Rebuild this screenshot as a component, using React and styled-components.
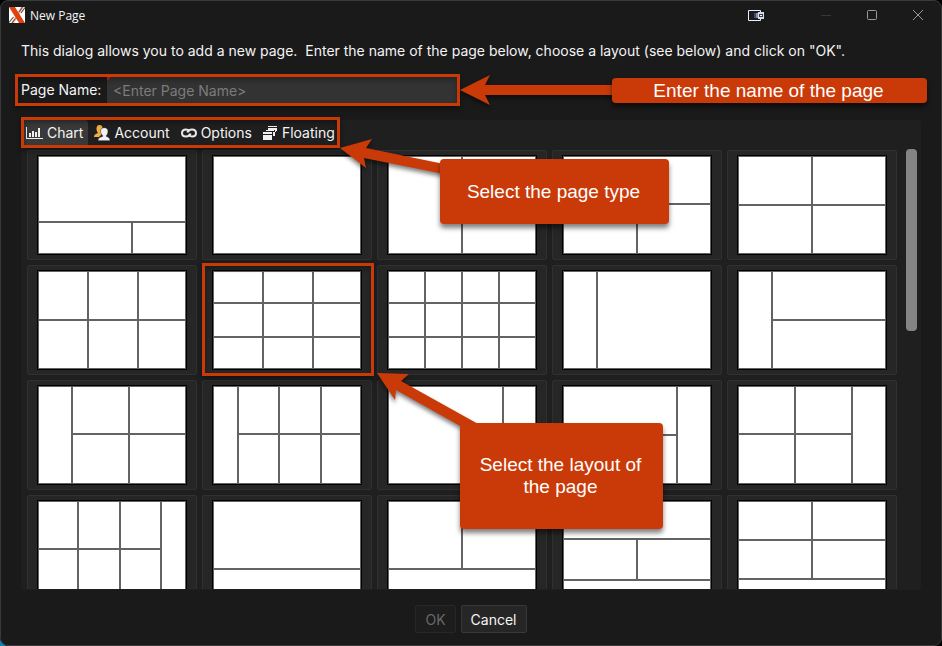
import React, { useState } from "react";
import styled, { createGlobalStyle, css } from "styled-components";

const accent = "#ca3a08";

const GlobalStyle = createGlobalStyle`
  * {
    box-sizing: border-box;
  }

  body {
    margin: 0;
    background: #000;
    color: #f4f4f4;
    font-family: Inter, "Liberation Sans", sans-serif;
    font-size: 14px;
  }

  button, input {
    font: inherit;
    color: inherit;
  }
`;

const Desktop = styled.div`
  position: relative;
  height: 100vh;
  background: linear-gradient(45deg, #0a84b8 4px, #000 5px);
`;

const Dialog = styled.main`
  display: flex;
  flex-direction: column;
  height: 100%;
  background: #1a1a1a;
  border: 1px solid #3a3a3a;
  border-radius: 8px;
`;

const TitleBar = styled.header`
  display: flex;
  align-items: center;
  height: 28px;
  padding-left: 8px;
`;

const Title = styled.h1`
  flex: 1;
  margin: 0 0 0 5px;
  font: 400 12px "Open Sans", "Noto Sans", sans-serif;
`;

const WindowButton = styled.button`
  display: flex;
  align-items: center;
  justify-content: center;
  width: 46px;
  height: 28px;
  padding: 0;
  border: 0;
  background: none;
`;

const DockButton = styled(WindowButton)`
  margin-right: 24px;
`;

const Body = styled.div`
  display: flex;
  flex: 1;
  flex-direction: column;
  min-height: 0;
  padding: 12px 20px;
`;

const Intro = styled.p`
  margin: 0 0 16px;
  line-height: 20px;
  white-space: pre-wrap;
`;

// orange frame drawn around the part that a callout points at
const framed = css`
  position: relative;

  &::after {
    content: "";
    position: absolute;
    border: 3px solid ${accent};
    box-shadow: 0 3px 5px rgba(0, 0, 0, 0.4), inset 0 3px 5px rgba(0, 0, 0, 0.3);
    pointer-events: none;
    inset: ${(props) => props.$frame || "-3px"};
  }
`;

const NameRow = styled.div`
  ${framed}
  display: flex;
  width: 436px;
  height: 26px;
  margin-bottom: 17px;
`;

const NameLabel = styled.label`
  width: 86px;
  line-height: 26px;
  white-space: nowrap;
`;

const NameField = styled.div`
  position: relative;
  display: flex;
  flex: 1;

  &::before {
    content: "";
    position: absolute;
    border: 2px solid;
    border-color: #c8202c transparent transparent #c8202c;
  }
`;

const NameInput = styled.input`
  flex: 1;
  min-width: 0;
  padding: 0 6px;
  border: 0;
  background: #333;
  outline: none;

  &::placeholder {
    color: #7b7b7b;
    opacity: 1;
  }
`;

const Panel = styled.section`
  display: flex;
  flex: 1;
  flex-direction: column;
  min-height: 0;
  padding-bottom: 1px;
  background: #1f1f1f;
  border-radius: 3px;
`;

const Tabs = styled.div`
  ${framed}
  display: flex;
  align-self: flex-start;
  gap: 1px;
  height: 25px;
  margin-bottom: 4px;
`;

const Tab = styled.button`
  display: flex;
  align-items: center;
  gap: 4px;
  height: 25px;
  padding: 0 5px;
  border: 0;
  border-radius: 0 3px 0 0;
  background: ${(props) => (props.$active ? "#393939" : "none")};
`;

const ScrollArea = styled.div`
  display: flex;
  justify-content: space-between;
  flex: 1;
  min-height: 0;
  padding: 0 4px 0 6px;
  overflow: hidden;
`;

const LayoutGrid = styled.div`
  display: grid;
  flex: 1;
  grid-template-columns: repeat(auto-fill, 170px);
  align-content: start;
  gap: 5px;
  padding-top: 1px;
`;

const ScrollThumb = styled.div`
  width: 11px;
  height: 182px;
  border-radius: 4px;
  background: #848484;
`;

const LayoutCard = styled.button`
  height: 110px;
  padding: 4px 9px;
  border: 1px solid #303030;
  border-radius: 2px;
  background: #262626;
  ${(props) => props.$frame && framed}
`;

const Thumb = styled.span`
  display: flex;
  height: 100px;
  padding: 1px;
  border: 1px solid #000;
  background: #636363;
`;

const Split = styled.span`
  display: flex;
  flex: ${(props) => props.$size} 1 0;
  flex-direction: ${(props) => (props.$down ? "column" : "row")};
  gap: 2px;
`;

const Pane = styled.span`
  flex: ${(props) => props.$size} 1 0;
  background: #fff;
`;

const Footer = styled.footer`
  display: flex;
  justify-content: center;
  gap: 5px;
  margin-top: 15px;
`;

const FooterButton = styled.button`
  height: 28px;
  padding: 0 9px;
  border: 1px solid #383838;
  border-radius: 2px;
  background: #262626;

  &:disabled {
    color: #696969;
    border-color: #272727;
    background: #1d1d1d;
  }
`;

const Arrows = styled.svg`
  position: absolute;
  top: 0;
  left: 0;
  overflow: visible;
  pointer-events: none;
  fill: ${accent};
  filter: drop-shadow(0 3px 2px rgba(0, 0, 0, 0.5));
`;

const Callout = styled.div`
  position: absolute;
  display: flex;
  align-items: center;
  justify-content: center;
  left: ${(props) => props.$x}px;
  top: ${(props) => props.$y}px;
  width: ${(props) => props.$w}px;
  height: ${(props) => props.$h}px;
  padding: 0 18px 0 16px;
  border-radius: 4px;
  background: ${accent};
  box-shadow: 0 4px 5px rgba(0, 0, 0, 0.5);
  color: #fff;
  font: 19px/22px "Liberation Sans", Arial, sans-serif;
  text-align: center;
`;

// A layout is a tree: a number is a pane, an object splits its space.
const row = (size, ...items) => ({ size, items });
const col = (size, ...items) => ({ size, items, down: true });

const twoRows = (size, widths, top = 46, bottom = 48) =>
  col(size, row(top, ...widths), row(bottom, ...widths));

const layouts = [
  col(1, 64, row(30, 92, 52)),
  row(1, 1),
  row(1, 72, 72),
  col(1, 46, row(48, 72, 72)),
  twoRows(1, [72, 72], 47, 47),
  twoRows(1, [48, 48, 46], 47, 47),
  col(1, row(30, 48, 48, 46), row(32, 48, 48, 46), row(30, 48, 48, 46)),
  col(1, row(30, 35, 35, 35, 35), row(32, 35, 35, 35, 35), row(30, 35, 35, 35, 35)),
  row(1, 32, 112),
  row(1, 32, col(112, 47, 47)),
  row(1, 32, twoRows(112, [55, 55])),
  row(1, 23, twoRows(121, [39, 40, 38])),
  row(1, 113, 31),
  row(1, col(112, 47, 47), 32),
  row(1, twoRows(112, [55, 55]), 32),
  row(1, twoRows(121, [38, 40, 39]), 23),
  col(1, 66, 28),
  col(1, row(66, 72, 72), 28),
  col(1, 36, row(39, 72, 72), 17),
  col(1, row(37, 72, 72), row(37, 72, 72), 18),
];

function LayoutNode({ node }) {
  if (typeof node === "number") {
    return <Pane $size={node} />;
  }
  return (
    <Split $size={node.size} $down={node.down}>
      {node.items.map((item, i) => (
        <LayoutNode key={i} node={item} />
      ))}
    </Split>
  );
}

const LogoIcon = () => (
  <svg width="16" height="16" viewBox="0 0 16 16">
    <path fill="#fff" d="M0 0h16v16H0z" />
    <path stroke="#4c4c4c" strokeWidth="1.1" d="M10 5 13.500 0M12 6 16 .5M0 15.500 4.500 10M3 16 6.500 11.500" />
    <path fill="#dd4310" d="M0 0h6L16 16h-6z" />
    <path fill="#dd4310" d="M12 0h3L5 16H2z" opacity=".35" />
  </svg>
);

const DockIcon = () => (
  <svg width="16" height="11" viewBox="0 0 16 11">
    <path fill="#171a22" stroke="#eceef5" d="M.5.5h12v10H.5z" />
    <path fill="#4a4c54" d="M6 3h2v5H6z" />
    <path fill="#8b8ea0" d="M8 3h2v5H8z" />
    <path fill="#d9dbe8" d="M10 2h6v7h-6z" />
    <path fill="#3a3d4c" d="M11 4h4v3h-4z" />
    <path fill="#fff" d="M12 5h2v1h-2z" />
  </svg>
);

const ChartIcon = () => (
  <svg width="17" height="14" viewBox="0 0 17 14" fill="#eee">
    <path d="M0 1h1v11h16v1H0zM3 7h2v4H3zM6 5h2v6H6zM9 6h2v5H9zM12 2h2v9h-2z" />
  </svg>
);

const AccountIcon = () => (
  <svg width="16" height="16" viewBox="0 0 16 16">
    <path fill="#f0ad42" d="M3 1.500C4-.5 8-.5 8.500 2.500L7 5v5l-2 2H0c0-2.500 1.500-3 4-4C2.500 6 2 3.500 3 1.500z" />
    <path fill="#f0f0f0" stroke="#222" strokeWidth=".5" d="M6.500 6C6.500 1.500 14 1.500 14 6c0 2-.7 3.500-1.600 4.500v.9c2 .8 3.600 1.200 3.600 4.300H4c0-3 2-3.500 4.600-4.300v-.9C7.500 9.500 6.500 8 6.500 6z" />
  </svg>
);

const LinkIcon = () => (
  <svg width="16" height="10" viewBox="0 0 16 10" fill="none" stroke="#e8e8e8" strokeWidth="2">
    <path d="M9.500 5.500C9 7.500 7.300 8.500 5 8.500 2.500 8.500 1 7 1 5s1.500-3.500 4-3.500c1.500 0 2.500.5 3.500 2" />
    <path d="M6.500 4.500C7 2.500 8.700 1.500 11 1.500c2.500 0 4 1.500 4 3.500s-1.500 3.500-4 3.500c-1.500 0-2.500-.5-3.500-2" />
  </svg>
);

const FloatIcon = () => (
  <svg width="15" height="14" viewBox="0 0 15 14" fill="#f0f0f0">
    <path d="M5 0h9v1H5zM5 2h9v3h-1v1h-1V4H5z" />
    <path d="M3 4h8v1H3zM10 6h2v4h-2zM0 6h9v2H0zM0 9h9v5H0z" />
  </svg>
);

const tabs = [
  { name: "Chart", Icon: ChartIcon },
  { name: "Account", Icon: AccountIcon },
  { name: "Options", Icon: LinkIcon },
  { name: "Floating", Icon: FloatIcon },
];

function App() {
  const [name, setName] = useState("");
  const [tab, setTab] = useState("Chart");

  return (
    <Desktop>
      <GlobalStyle />
      <Dialog>
        <TitleBar>
          <LogoIcon />
          <Title>New Page</Title>
          <DockButton aria-label="Dock">
            <DockIcon />
          </DockButton>
          <WindowButton aria-label="Minimize">
            <svg width="10" height="10" stroke="#383838">
              <path d="M0 5.500h10" />
            </svg>
          </WindowButton>
          <WindowButton aria-label="Maximize">
            <svg width="10" height="10" fill="none" stroke="#999">
              <rect x=".5" y=".5" width="9" height="9" rx="1" />
            </svg>
          </WindowButton>
          <WindowButton aria-label="Close">
            <svg width="10" height="10" stroke="#999">
              <path d="M0 0l10 10M10 0L0 10" />
            </svg>
          </WindowButton>
        </TitleBar>
        <Body>
          <Intro>
            {'This dialog allows you to add a new page.  Enter the name of the page below, choose a layout (see below) and click on "OK".'}
          </Intro>
          <NameRow $frame="-3px -3px -3px -6px">
            <NameLabel htmlFor="pageName">Page Name:</NameLabel>
            <NameField>
              <NameInput
                id="pageName"
                placeholder="<Enter Page Name>"
                value={name}
                onChange={(e) => setName(e.target.value)}
              />
            </NameField>
          </NameRow>
          <Panel>
            <Tabs role="tablist" $frame="-3px 0">
              {tabs.map(({ name, Icon }) => (
                <Tab
                  key={name}
                  role="tab"
                  aria-selected={tab === name}
                  $active={tab === name}
                  onClick={() => setTab(name)}
                >
                  <Icon />
                  {name}
                </Tab>
              ))}
            </Tabs>
            <ScrollArea>
              <LayoutGrid>
                {layouts.map((layout, i) => (
                  <LayoutCard
                    key={i}
                    aria-label={`Layout ${i + 1}`}
                    $frame={i === 6 ? "-3px -3px -2px -1px" : undefined}
                  >
                    <Thumb>
                      <LayoutNode node={layout} />
                    </Thumb>
                  </LayoutCard>
                ))}
              </LayoutGrid>
              <ScrollThumb />
            </ScrollArea>
          </Panel>
          <Footer>
            <FooterButton disabled={!name}>OK</FooterButton>
            <FooterButton>Cancel</FooterButton>
          </Footer>
        </Body>
      </Dialog>

      <Arrows width="942" height="646">
        <path d="M460 90l30-15-5 10h130v10H485l5 10z" />
        <path d="M340 148l32-9-6 9 78 16v10l-80-16 2 10z" />
        <path d="M377 373l32 1-8 7 79 44-18 2-66-37-1 10z" />
      </Arrows>
      <Callout $x={612} $y={78} $w={315} $h={25}>Enter the name of the page</Callout>
      <Callout $x={440} $y={159} $w={229} $h={65}>Select the page type</Callout>
      <Callout $x={460} $y={423} $w={203} $h={106}>Select the layout of the page</Callout>
    </Desktop>
  );
}

export default App;
